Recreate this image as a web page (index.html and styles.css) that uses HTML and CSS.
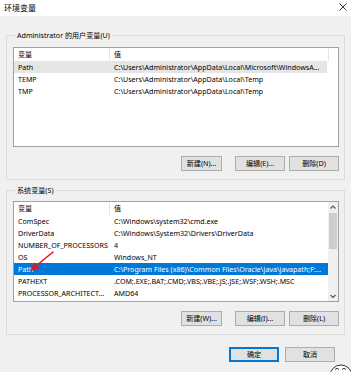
FILE: index.html
```html
<!DOCTYPE html>
<html lang="zh-CN">
<head>
<meta charset="utf-8">
<title>环境变量</title>
<link rel="stylesheet" href="styles.css">
</head>
<body>
<div class="window">
  <div class="titlebar">
    <span class="title">环境变量</span>
    <svg class="close" width="8" height="8" viewBox="0 0 8 8"><path d="M0.5 0.5L7.5 7.5M7.5 0.5L0.5 7.5" stroke="#222" stroke-width="0.9" fill="none"/></svg>
  </div>
  <div class="content">
    <fieldset class="group group-user">
      <legend>Administrator 的用户变量(U)</legend>
      <div class="listview lv-user">
        <div class="lv-header">
          <div class="c1">变量</div>
          <div class="c2">值</div>
          <div class="c3"></div>
        </div>
        <div class="lv-row hot"><div class="c1">Path</div><div class="c2">C:\Users\Administrator\AppData\Local\Microsoft\WindowsA...</div></div>
        <div class="lv-row"><div class="c1">TEMP</div><div class="c2">C:\Users\Administrator\AppData\Local\Temp</div></div>
        <div class="lv-row"><div class="c1">TMP</div><div class="c2">C:\Users\Administrator\AppData\Local\Temp</div></div>
      </div>
      <div class="btn-row">
        <button class="btn btn-new">新建(N)...</button>
        <button class="btn btn-edit">编辑(E)...</button>
        <button class="btn btn-del">删除(D)</button>
      </div>
    </fieldset>

    <fieldset class="group group-sys">
      <legend>系统变量(S)</legend>
      <div class="listview lv-sys">
        <div class="lv-main">
          <div class="lv-header">
            <div class="c1">变量</div>
            <div class="c2">值</div>
          </div>
          <div class="lv-row"><div class="c1">ComSpec</div><div class="c2">C:\Windows\system32\cmd.exe</div></div>
          <div class="lv-row"><div class="c1">DriverData</div><div class="c2">C:\Windows\System32\Drivers\DriverData</div></div>
          <div class="lv-row"><div class="c1">NUMBER_OF_PROCESSORS</div><div class="c2">4</div></div>
          <div class="lv-row"><div class="c1">OS</div><div class="c2">Windows_NT</div></div>
          <div class="lv-row selected"><div class="c1">Path</div><div class="c2">C:\Program Files (x86)\Common Files\Oracle\Java\javapath;F:...</div></div>
          <div class="lv-row"><div class="c1">PATHEXT</div><div class="c2">.COM;.EXE;.BAT;.CMD;.VBS;.VBE;.JS;.JSE;.WSF;.WSH;.MSC</div></div>
          <div class="lv-row"><div class="c1">PROCESSOR_ARCHITECT...</div><div class="c2">AMD64</div></div>
        </div>
        <div class="scrollbar">
          <svg class="sb-arrow" width="10" height="10" viewBox="0 0 10 10"><path d="M2.5 6.5L5 4L7.5 6.5" stroke="#555" stroke-width="1.2" fill="none"/></svg>
          <div class="sb-track"><div class="sb-thumb"></div></div>
          <svg class="sb-arrow" width="10" height="10" viewBox="0 0 10 10"><path d="M2.5 4L5 6.5L7.5 4" stroke="#555" stroke-width="1.2" fill="none"/></svg>
        </div>
      </div>
      <div class="btn-row">
        <button class="btn btn-new">新建(W)...</button>
        <button class="btn btn-edit">编辑(I)...</button>
        <button class="btn btn-del">删除(L)</button>
      </div>
    </fieldset>

    <div class="dialog-btns">
      <button class="btn btn-ok">确定</button>
      <button class="btn btn-cancel">取消</button>
    </div>
  </div>

  <svg class="red-arrow" width="30" height="24" viewBox="0 0 30 24">
    <path d="M27 1L10 15" stroke="#e4161b" stroke-width="1.6" fill="none" stroke-linecap="round"/>
    <path d="M4 20L8.5 11.5L13.5 17.5Z" fill="#e4161b"/>
  </svg>

  <svg class="mascot" width="22" height="10" viewBox="0 0 22 10">
    <circle cx="12" cy="14" r="11" fill="#fff" stroke="#333" stroke-width="1"/>
    <path d="M6 7.5Q8 5 10 7.5M13 7.5Q15 5 17 7.5" stroke="#333" stroke-width="1" fill="none"/>
  </svg>
</div>
</body>
</html>
```

FILE: styles.css
```css
* { box-sizing: border-box; }

html, body {
  margin: 0;
  padding: 0;
}

body {
  width: 351px;
  height: 372px;
  overflow: hidden;
  background: #f0f0f0;
  font-family: "Noto Sans", "Noto Sans CJK SC", sans-serif;
  font-size: 7.1px;
  color: #000;
}

.window {
  position: relative;
  width: 351px;
  height: 372px;
}

.titlebar {
  height: 16px;
  background: #fff;
  display: flex;
  align-items: center;
  justify-content: space-between;
  padding: 0 4px 2px 4px;
}

.title {
  font-size: 8px;
  font-family: "Noto Sans CJK SC", sans-serif;
}

.close {
  display: block;
}

.content {
  display: flex;
  flex-direction: column;
}

.group {
  border: 1px solid #dcdcdc;
  margin: 0 6px 0 6px;
  padding: 6px 5px 8px 6px;
  min-width: 0;
}

.group-user { margin-top: 14px; }
.group-sys { margin-top: 5px; }

.group legend {
  padding: 0 2px;
  margin-left: 2px;
  line-height: 10px;
  height: 10px;
}

.listview {
  background: #fff;
  border: 1px solid #a0a0a0;
  overflow: hidden;
}

.lv-user { height: 100px; margin-top: 1px; }
.lv-sys {
  height: 101px;
  display: flex;
}

.lv-main {
  flex: 1;
  min-width: 0;
}

.lv-header {
  display: flex;
  height: 13px;
  line-height: 13px;
}

.lv-header .c1 {
  border-right: 1px solid #e5e5e5;
}

.lv-header .c3 {
  width: 1px;
  border-left: 1px solid #e5e5e5;
  margin-left: auto;
  margin-right: 9px;
}

.lv-row {
  display: flex;
  height: 12px;
  line-height: 12px;
  white-space: nowrap;
}

.lv-user .lv-row { margin-right: 11px; }

.c1 {
  width: 96px;
  flex: none;
  padding-left: 4px;
  overflow: hidden;
  white-space: nowrap;
}

.c2 {
  padding-left: 4px;
  overflow: hidden;
  white-space: nowrap;
}

.lv-row.hot { background: #e5e5e5; }

.lv-row.selected {
  background: #0078d7;
  color: #fff;
}

.scrollbar {
  width: 10px;
  flex: none;
  background: #f0f0f0;
  display: flex;
  flex-direction: column;
}

.sb-arrow { display: block; flex: none; }

.sb-track {
  flex: 1;
  padding: 1px 1px;
}

.sb-thumb {
  height: 36px;
  background: #cdcdcd;
}

.btn-row {
  display: flex;
  justify-content: flex-end;
  margin-top: 9px;
  height: 15px;
}

.btn {
  font-family: "Noto Sans", "Noto Sans CJK SC", sans-serif;
  font-size: 7.1px;
  color: #000;
  background: #e1e1e1;
  border: 1px solid #adadad;
  padding: 0;
  height: 15px;
  line-height: 13px;
  margin: 0;
}

.btn-new { width: 41px; margin-right: 13px; }
.btn-edit { width: 50px; margin-right: 4px; }
.btn-del { width: 50px; }

.dialog-btns {
  display: flex;
  justify-content: flex-end;
  margin: 12px 16px 0 0;
  gap: 6px;
}

.btn-ok {
  width: 50px;
  border: 1px solid #0078d7;
  box-shadow: inset 0 0 0 1px #0078d7;
}

.btn-cancel { width: 50px; }

.red-arrow {
  position: absolute;
  left: 26px;
  top: 251px;
}

.mascot {
  position: absolute;
  left: 329px;
  top: 362px;
}
```
